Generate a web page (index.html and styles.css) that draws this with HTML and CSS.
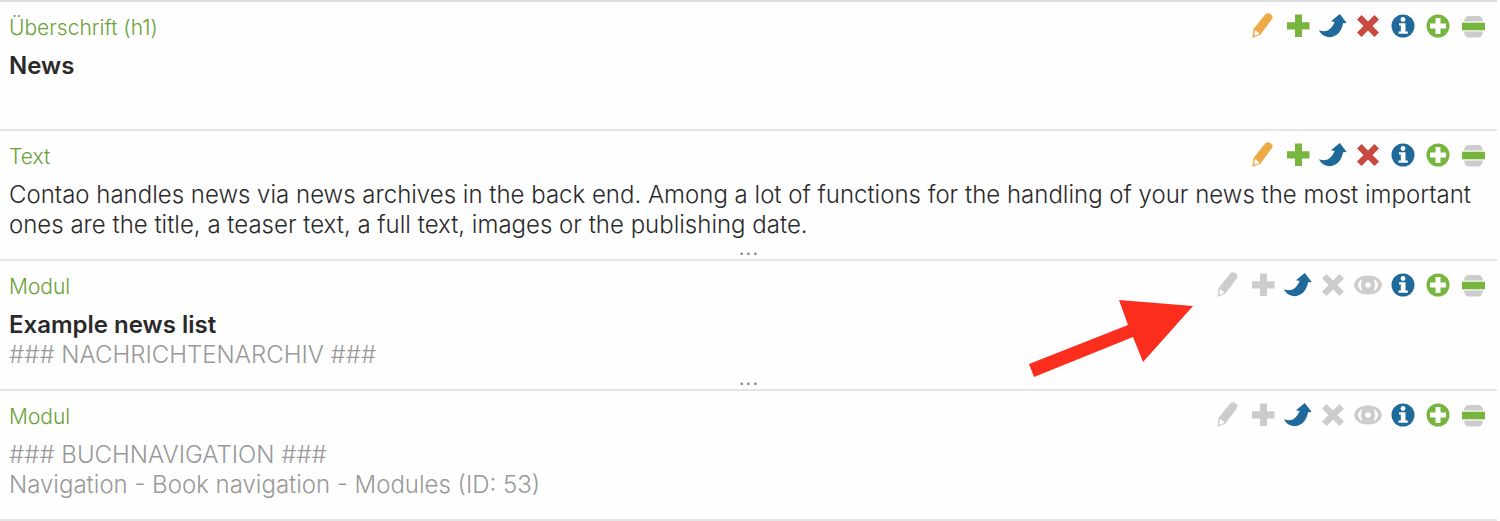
FILE: index.html
```html
<!DOCTYPE html>
<html lang="de">
<head>
    <meta charset="UTF-8">
    <meta name="viewport" content="width=device-width, initial-scale=1.0">
    <title>Inhaltselemente</title>
    <link rel="stylesheet" href="styles.css">
</head>
<body>
    <!-- Icons -->
    <svg class="sprite" aria-hidden="true">
        <symbol id="edit" viewBox="0 0 28 28">
            <path d="M3.500 26 4.500 17 16 2.800Q18.200 .500 20.800 1.800L22.800 3.300Q24.300 4.800 22.800 7.200L11.500 22.500Z"/>
            <path class="cut" d="M5.800 18.500Q8 18 8.300 20.300 10.600 20 9.800 22L6.500 23.800 5.200 23Z"/>
        </symbol>
        <symbol id="copy" viewBox="0 0 28 28">
            <path d="M11 2.500H18V10.200H25.500V17.500H18V25H11V17.500H3V10.200H11Z"/>
        </symbol>
        <symbol id="cut" viewBox="0 0 28 28">
            <path d="M0 18.300C4 19.800 7.500 19.500 9.800 17.800 12.500 15.800 14.500 12.500 15.700 9.900L12 9.300 20.800 2 27.700 11 24 11.300C23 18 19 24 12.500 25 7 25.800 2 23 0 18.300Z"/>
        </symbol>
        <symbol id="delete" viewBox="0 0 28 28">
            <path d="M7.500 3 14 9.500 20.500 3 25 7.500 18.500 14 25 20.500 20.500 25 14 18.500 7.500 25 3 20.500 9.500 14 3 7.500Z"/>
        </symbol>
        <symbol id="toggle" viewBox="0 0 28 28">
            <path d="M0 14C1 7.500 7 4.500 14 4.500S27 7.500 28 14C27 20.500 21 23.500 14 23.500S1 20.500 0 14Z"/>
            <path class="cut" d="M4 14Q4.500 9.500 8.500 8.200 5.500 14 8.500 19.800 4.500 18.500 4 14ZM24 14Q23.500 9.500 19.500 8.200 22.500 14 19.500 19.800 23.500 18.500 24 14Z"/>
            <circle class="cut" cx="14" cy="14" r="2.800"/>
        </symbol>
        <symbol id="show" viewBox="0 0 28 28">
            <circle cx="14" cy="14" r="11.500"/>
            <circle class="cut" cx="14" cy="7.500" r="2.400"/>
            <path class="cut" d="M10 11.300H16.500V19.500H18.800V21.800H9.500V19.500H11.800V13.500H10Z"/>
        </symbol>
        <symbol id="new" viewBox="0 0 28 28">
            <circle cx="14" cy="14" r="11.500"/>
            <path class="cut" d="M11.500 6H16.500V11.500H22V16.500H16.500V22H11.500V16.500H6V11.500H11.500Z"/>
        </symbol>
        <symbol id="drag" viewBox="0 0 28 28">
            <path class="grip" d="M5 9.500Q5.500 4 10 4H19Q23.500 4 24 9.500ZM5 19.500Q5.500 25.500 10 25.500H19Q23.500 25.500 24 19.500Z"/>
            <path d="M3 10.700H26V18.300H3Z"/>
        </symbol>
    </svg>

    <ul class="listing">
        <li class="element">
            <div class="head">
                <span class="type">Überschrift (h1)</span>
                <div class="operations">
                    <button class="op orange" aria-label="Bearbeiten"><svg><use href="#edit"/></svg></button>
                    <button class="op green" aria-label="Duplizieren"><svg><use href="#copy"/></svg></button>
                    <button class="op blue" aria-label="Verschieben"><svg><use href="#cut"/></svg></button>
                    <button class="op red" aria-label="Löschen"><svg><use href="#delete"/></svg></button>
                    <button class="op blue" aria-label="Details"><svg><use href="#show"/></svg></button>
                    <button class="op green" aria-label="Neu"><svg><use href="#new"/></svg></button>
                    <button class="op green" aria-label="Ziehen"><svg><use href="#drag"/></svg></button>
                </div>
            </div>
            <div class="preview">
                <h1>News</h1>
            </div>
        </li>

        <li class="element">
            <div class="head">
                <span class="type">Text</span>
                <div class="operations">
                    <button class="op orange" aria-label="Bearbeiten"><svg><use href="#edit"/></svg></button>
                    <button class="op green" aria-label="Duplizieren"><svg><use href="#copy"/></svg></button>
                    <button class="op blue" aria-label="Verschieben"><svg><use href="#cut"/></svg></button>
                    <button class="op red" aria-label="Löschen"><svg><use href="#delete"/></svg></button>
                    <button class="op blue" aria-label="Details"><svg><use href="#show"/></svg></button>
                    <button class="op green" aria-label="Neu"><svg><use href="#new"/></svg></button>
                    <button class="op green" aria-label="Ziehen"><svg><use href="#drag"/></svg></button>
                </div>
            </div>
            <div class="preview">
                <p>Contao handles news via news archives in the back end. Among a lot of functions for the handling of your news the most important ones are the title, a teaser text, a full text, images or the publishing date.</p>
            </div>
            <button class="more">...</button>
        </li>

        <li class="element">
            <div class="head">
                <span class="type">Modul</span>
                <div class="operations">
                    <button class="op" disabled aria-label="Bearbeiten"><svg><use href="#edit"/></svg></button>
                    <button class="op" disabled aria-label="Duplizieren"><svg><use href="#copy"/></svg></button>
                    <button class="op blue" aria-label="Verschieben"><svg><use href="#cut"/></svg></button>
                    <button class="op" disabled aria-label="Löschen"><svg><use href="#delete"/></svg></button>
                    <button class="op" disabled aria-label="Sichtbarkeit"><svg><use href="#toggle"/></svg></button>
                    <button class="op blue" aria-label="Details"><svg><use href="#show"/></svg></button>
                    <button class="op green" aria-label="Neu"><svg><use href="#new"/></svg></button>
                    <button class="op green" aria-label="Ziehen"><svg><use href="#drag"/></svg></button>
                </div>
            </div>
            <div class="preview">
                <h1>Example news list</h1>
                <p class="wildcard">### NACHRICHTENARCHIV ###</p>
            </div>
            <button class="more">...</button>
            <!-- Roter Hinweispfeil -->
            <svg class="arrow" viewBox="0 0 164 78" aria-hidden="true">
                <path d="M0 64 99 25 90 0 164 6 114 62 104 37 5 77Z"/>
            </svg>
        </li>

        <li class="element">
            <div class="head">
                <span class="type">Modul</span>
                <div class="operations">
                    <button class="op" disabled aria-label="Bearbeiten"><svg><use href="#edit"/></svg></button>
                    <button class="op" disabled aria-label="Duplizieren"><svg><use href="#copy"/></svg></button>
                    <button class="op blue" aria-label="Verschieben"><svg><use href="#cut"/></svg></button>
                    <button class="op" disabled aria-label="Löschen"><svg><use href="#delete"/></svg></button>
                    <button class="op" disabled aria-label="Sichtbarkeit"><svg><use href="#toggle"/></svg></button>
                    <button class="op blue" aria-label="Details"><svg><use href="#show"/></svg></button>
                    <button class="op green" aria-label="Neu"><svg><use href="#new"/></svg></button>
                    <button class="op green" aria-label="Ziehen"><svg><use href="#drag"/></svg></button>
                </div>
            </div>
            <div class="preview">
                <p class="wildcard">### BUCHNAVIGATION ###<br>Navigation - Book navigation - Modules (ID: 53)</p>
            </div>
        </li>
    </ul>
</body>
</html>
```
FILE: styles.css
```css
body {
    font-family: Inter, "Liberation Sans", sans-serif;
    font-size: 24px;
    font-weight: 300;
    line-height: 30px;
    margin: 0;
    background-color: #fefefe;
    color: #2a2a2a;
}

.sprite {
    display: none;
}

/* Liste */
.listing {
    list-style: none;
    margin: 0 3px 0 0;
    padding: 0;
    border-top: 2px solid #dcdcdc;
}

.element {
    position: relative;
    box-sizing: border-box;
    min-height: 130px;
    padding: 10px 10px 0 9px;
    border-bottom: 2px solid #e6e6e6;
}

.element:first-child {
    min-height: 129px;
}

.head {
    display: flex;
    justify-content: space-between;
    margin-bottom: 7px;
}

.type {
    font-size: 21px;
    line-height: 32px;
    color: #6aa135;
}

/* Inhalt */
.preview h1,
.preview p {
    margin: 0;
    font-size: inherit;
}

.preview h1 {
    font-weight: 600;
}

.preview .wildcard {
    color: #999;
}

.more {
    position: absolute;
    bottom: 2px;
    left: 50%;
    transform: translateX(-50%);
    padding: 0;
    border: none;
    background: none;
    font: inherit;
    line-height: 20px;
    color: #888;
    cursor: pointer;
}

/* Icons */
.operations {
    display: flex;
    gap: 7px;
}

.op {
    width: 28px;
    height: 28px;
    padding: 0;
    border: none;
    background: none;
    color: #ccc;
    cursor: pointer;
}

.op svg {
    display: block;
    width: 28px;
    height: 28px;
    fill: currentColor;
}

.cut {
    fill: #fefefe;
}

.grip {
    fill: #ccc;
}

.orange {
    color: #eda945;
}

.green {
    color: #78b53f;
}

.blue {
    color: #20699b;
}

.red {
    color: #c9483f;
}

/* Pfeil */
.arrow {
    position: absolute;
    top: 39px;
    right: 304px;
    width: 164px;
    height: 78px;
    fill: #fb2d1d;
}
```
